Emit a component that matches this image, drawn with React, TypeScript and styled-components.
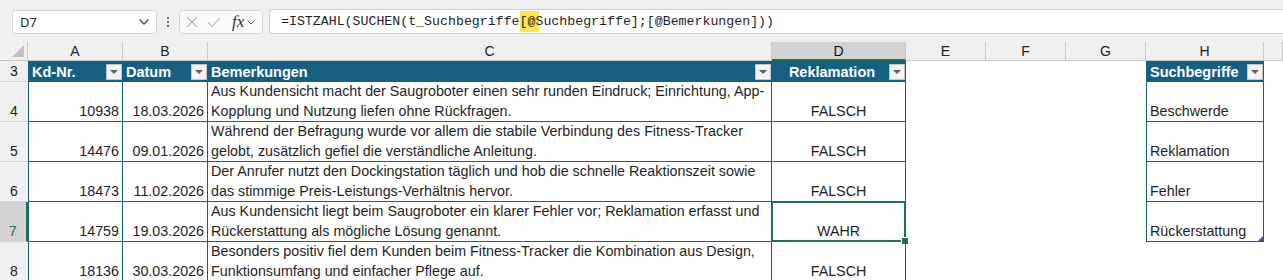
import styled, { createGlobalStyle, css } from 'styled-components';

const TEAL = '#156082';
const GREEN = '#217346';
const GRID = '#c8c8c8';

const GlobalStyle = createGlobalStyle`
  html, body {
    margin: 0;
    padding: 0;
    background: #ffffff;
    overflow: hidden;
  }
  body {
    font-family: "Liberation Sans", Arial, sans-serif;
  }
`;

const Window = styled.div`
  width: 1283px;
  height: 280px;
  overflow: hidden;
  display: flex;
  flex-direction: column;
  background: #ffffff;
`;

/* ---------- formula bar ---------- */

const FormulaBar = styled.div`
  height: 42px;
  flex: none;
  box-sizing: border-box;
  padding: 9px 0 0 12px;
  display: flex;
  align-items: flex-start;
  background: #f0f0f0;
`;

const NameBox = styled.div`
  width: 145px;
  height: 24px;
  margin-top: 1px;
  box-sizing: border-box;
  border: 1px solid #d6d6d6;
  border-radius: 4px;
  background: #ffffff;
  display: flex;
  align-items: center;
  justify-content: space-between;
  padding: 0 7px 0 7px;
  font-family: "Noto Sans", "Liberation Sans", sans-serif;
  font-size: 13px;
  color: #1f1f1f;
`;

const Grip = styled.div`
  width: 22px;
  height: 25px;
  display: flex;
  flex-direction: column;
  align-items: center;
  justify-content: center;
  gap: 2px;

  span {
    width: 2px;
    height: 2px;
    background: #444;
    border-radius: 1px;
  }
`;

const FxBox = styled.div`
  width: 84px;
  height: 24px;
  margin-top: 1px;
  box-sizing: border-box;
  border: 1px solid #d6d6d6;
  border-radius: 4px;
  background: #fbfbfb;
  display: flex;
  align-items: center;
  padding: 0 0 0 6px;
  gap: 9px;
`;

const FxLabel = styled.span`
  font-family: "Liberation Serif", "DejaVu Serif", serif;
  font-style: italic;
  font-size: 17px;
  color: #333;
  margin-left: 2px;
  display: flex;
  align-items: center;
  gap: 3px;
`;

const FormulaInput = styled.div`
  flex: 1;
  height: 25px;
  margin-left: 6px;
  box-sizing: border-box;
  border: 1px solid #cfcfcf;
  border-right: none;
  border-radius: 4px 0 0 4px;
  background: #ffffff;
  display: flex;
  align-items: center;
  padding-left: 11px;
  font-family: "Liberation Mono", "DejaVu Sans Mono", monospace;
  font-size: 13.25px;
  color: #1f1f1f;
  white-space: pre;
`;

/* match highlight: reaches a little under the next letter */
const Mark = styled.span`
  background: #fde74c;
  box-shadow: 4px 0 0 #fde74c;
  padding: 3px 0;
`;

/* ---------- sheet ---------- */

const Sheet = styled.div`
  display: grid;
  grid-template-columns: 28px 95px 85px 564px 134px 80px 80px 80px 118px 1fr;
  grid-template-rows: 19px 21px repeat(5, 40px);
  font-size: 14.3px;
  color: #1f1f1f;
`;

const ColHead = styled.div<{ $active?: boolean; $corner?: boolean }>`
  box-sizing: border-box;
  background: #f0f0f0;
  border-right: 1px solid ${GRID};
  border-bottom: 1px solid ${GRID};
  display: flex;
  align-items: center;
  justify-content: center;
  font-size: 14px;
  color: #222;
  position: relative;
  ${({ $active }) =>
    $active &&
    css`
      background: #d3d3d3;
      border-bottom: 2px solid ${GREEN};
      color: #111;
    `}
  ${({ $corner }) =>
    $corner &&
    css`
      &::after {
        content: '';
        position: absolute;
        right: 3px;
        bottom: 3px;
        border-style: solid;
        border-width: 0 0 12px 12px;
        border-color: transparent transparent #c2c2c2 transparent;
      }
    `}
`;

const RowHead = styled.div<{ $active?: boolean }>`
  box-sizing: border-box;
  background: #f0f0f0;
  border-bottom: 1px solid #d6d6d6;
  display: flex;
  align-items: flex-end;
  justify-content: center;
  padding-bottom: 2px;
  font-size: 14px;
  color: #222;
  ${({ $active }) =>
    $active &&
    css`
      background: #d3d3d3;
      border-right: 2px solid ${GREEN};
      color: ${GREEN};
    `}
`;

const HeadCell = styled.div<{ $center?: boolean; $first?: boolean }>`
  box-sizing: border-box;
  background: ${TEAL};
  color: #ffffff;
  font-weight: bold;
  font-size: 14.5px;
  display: flex;
  align-items: center;
  padding: 0 1px 0 3px;
  ${({ $first }) => $first && css`border-left: 1px solid ${TEAL};`}

  > span {
    flex: 1;
    white-space: nowrap;
    overflow: hidden;
    text-align: ${({ $center }) => ($center ? 'center' : 'left')};
  }
`;

const FilterButton = styled.div`
  width: 16px;
  height: 16px;
  flex: none;
  box-sizing: border-box;
  background: #f4f4f4;
  border: 1px solid #c4c4c4;
  display: flex;
  align-items: center;
  justify-content: center;

  &::after {
    content: '';
    border-style: solid;
    border-width: 4px 4px 0 4px;
    border-color: #5f5f5f transparent transparent transparent;
  }
`;

const DataCell = styled.div<{ $align?: 'left' | 'right' | 'center'; $first?: boolean; $selected?: boolean }>`
  box-sizing: border-box;
  position: relative;
  border-right: 1px solid ${TEAL};
  border-bottom: 1px solid ${TEAL};
  ${({ $first }) => $first && css`border-left: 1px solid ${TEAL};`}
  display: flex;
  flex-direction: column;
  justify-content: flex-end;
  text-align: ${({ $align }) => $align ?? 'left'};
  padding: 0 3px 0 3px;
  line-height: 20px;
  white-space: nowrap;

  ${({ $selected }) =>
    $selected &&
    css`
      &::before {
        content: '';
        position: absolute;
        left: -1px;
        top: -1px;
        right: -1px;
        bottom: -1px;
        border: 2px solid ${GREEN};
        pointer-events: none;
      }
      &::after {
        content: '';
        position: absolute;
        right: -4px;
        bottom: -4px;
        width: 6px;
        height: 6px;
        background: ${GREEN};
        border: 1px solid #ffffff;
      }
    `}
`;

const KeyCell = styled(DataCell)<{ $resize?: boolean }>`
  border-left: 1px solid ${TEAL};
  ${({ $resize }) =>
    $resize &&
    css`
      &::after {
        content: '';
        position: absolute;
        right: 0;
        bottom: 0;
        border-style: solid;
        border-width: 0 0 5px 5px;
        border-color: transparent transparent #3c55a5 transparent;
      }
    `}
`;

const Blank = styled.div`
  background: #ffffff;
`;

const Chevron = ({ w = 10 }: { w?: number }) => (
  <svg width={w} height={w * 0.6} viewBox="0 0 10 6" fill="none">
    <path d="M1 1l4 4 4-4" stroke="#444" strokeWidth="1.2" strokeLinecap="round" strokeLinejoin="round" />
  </svg>
);

const rows = [
  {
    n: 4,
    id: '10938',
    date: '18.03.2026',
    text: [
      'Aus Kundensicht macht der Saugroboter einen sehr runden Eindruck; Einrichtung, App-',
      'Kopplung und Nutzung liefen ohne Rückfragen.',
    ],
    result: 'FALSCH',
    key: 'Beschwerde',
  },
  {
    n: 5,
    id: '14476',
    date: '09.01.2026',
    text: [
      'Während der Befragung wurde vor allem die stabile Verbindung des Fitness-Tracker',
      'gelobt, zusätzlich gefiel die verständliche Anleitung.',
    ],
    result: 'FALSCH',
    key: 'Reklamation',
  },
  {
    n: 6,
    id: '18473',
    date: '11.02.2026',
    text: [
      'Der Anrufer nutzt den Dockingstation täglich und hob die schnelle Reaktionszeit sowie',
      'das stimmige Preis-Leistungs-Verhältnis hervor.',
    ],
    result: 'FALSCH',
    key: 'Fehler',
  },
  {
    n: 7,
    id: '14759',
    date: '19.03.2026',
    text: [
      'Aus Kundensicht liegt beim Saugroboter ein klarer Fehler vor; Reklamation erfasst und',
      'Rückerstattung als mögliche Lösung genannt.',
    ],
    result: 'WAHR',
    key: 'Rückerstattung',
  },
  {
    n: 8,
    id: '18136',
    date: '30.03.2026',
    text: [
      'Besonders positiv fiel dem Kunden beim Fitness-Tracker die Kombination aus Design,',
      'Funktionsumfang und einfacher Pflege auf.',
    ],
    result: 'FALSCH',
    key: null,
  },
];

export default function App() {
  return (
    <Window>
      <GlobalStyle />
      <FormulaBar>
        <NameBox>
          <span>D7</span>
          <Chevron />
        </NameBox>
        <Grip>
          <span />
          <span />
          <span />
        </Grip>
        <FxBox>
          <svg width="12" height="12" viewBox="0 0 12 12">
            <path d="M1 1l10 10M11 1L1 11" stroke="#b4b4b4" strokeWidth="1.1" />
          </svg>
          <svg width="14" height="12" viewBox="0 0 14 12">
            <path d="M1 6.5l4 4L13 1.5" stroke="#b4b4b4" strokeWidth="1.1" fill="none" />
          </svg>
          <FxLabel>
            fx
            <Chevron w={8} />
          </FxLabel>
        </FxBox>
        <FormulaInput>
          =ISTZAHL(SUCHEN(t_Suchbegriffe<Mark>[@</Mark>Suchbegriffe];[@Bemerkungen]))
        </FormulaInput>
      </FormulaBar>

      <Sheet>
        <ColHead $corner />
        <ColHead>A</ColHead>
        <ColHead>B</ColHead>
        <ColHead>C</ColHead>
        <ColHead $active>D</ColHead>
        <ColHead>E</ColHead>
        <ColHead>F</ColHead>
        <ColHead>G</ColHead>
        <ColHead>H</ColHead>
        <ColHead />

        <RowHead>3</RowHead>
        <HeadCell $first>
          <span>Kd-Nr.</span>
          <FilterButton />
        </HeadCell>
        <HeadCell>
          <span>Datum</span>
          <FilterButton />
        </HeadCell>
        <HeadCell>
          <span>Bemerkungen</span>
          <FilterButton />
        </HeadCell>
        <HeadCell $center>
          <span>Reklamation</span>
          <FilterButton />
        </HeadCell>
        <Blank />
        <Blank />
        <Blank />
        <HeadCell $first>
          <span>Suchbegriffe</span>
          <FilterButton />
        </HeadCell>
        <Blank />

        {rows.map((r) => (
          <Row key={r.n} row={r} />
        ))}
      </Sheet>
    </Window>
  );
}

function Row({ row }: { row: (typeof rows)[number] }) {
  const active = row.n === 7;
  return (
    <>
      <RowHead $active={active}>{row.n}</RowHead>
      <DataCell $first $align="right">{row.id}</DataCell>
      <DataCell $align="right">{row.date}</DataCell>
      <DataCell>
        {row.text.map((line) => (
          <div key={line}>{line}</div>
        ))}
      </DataCell>
      <DataCell $align="center" $selected={active}>
        {row.result}
      </DataCell>
      <Blank />
      <Blank />
      <Blank />
      {row.key ? <KeyCell $resize={row.n === 7}>{row.key}</KeyCell> : <Blank />}
      <Blank />
    </>
  );
}
